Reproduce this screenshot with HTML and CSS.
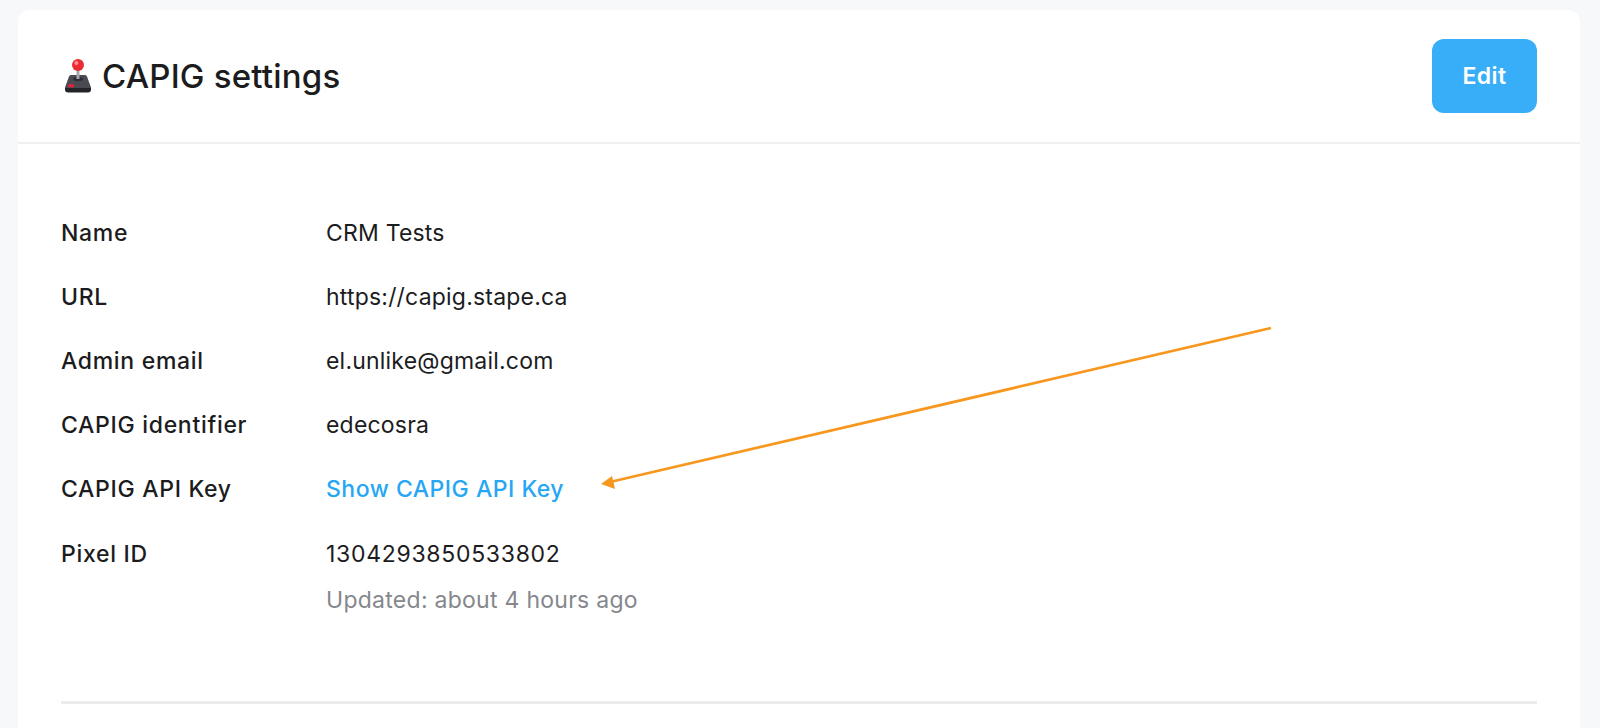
FILE: index.html
```html
<!DOCTYPE html>
<html>
<head>
    <title>CAPIG settings</title>
    <link rel="stylesheet" href="styles.css">
</head>
<body>
    <div class="card">
        <div class="card-header">
            <h1 class="title">
                <!-- Joystick emoji -->
                <svg class="joystick" viewBox="0 0 28 34" width="28" height="34">
                    <path d="M5 17.500 q.5 -1.500 2 -1.500 h14 q1.500 0 2 1.500 l4 11 v1 h-26 v-1 z" fill="#4a4b52"/>
                    <path d="M1 29 h26 v1.500 q0 3 -3 3 h-20 q-3 0 -3 -3 z" fill="#232428"/>
                    <ellipse cx="14" cy="20" rx="5" ry="2" fill="#2c2d32"/>
                    <rect x="12.500" y="10" width="3" height="10" fill="#a3a5ab"/>
                    <rect x="4" y="25" width="6" height="3.500" rx="1.500" fill="#d9243c"/>
                    <circle cx="14" cy="6" r="6" fill="#ea2b33"/>
                    <circle cx="12.400" cy="4" r="2" fill="#ff8d8d"/>
                </svg>
                CAPIG settings
            </h1>
            <button class="edit-btn">Edit</button>
        </div>
        <div class="card-body">
            <div class="row">
                <div class="label">Name</div>
                <div class="value">CRM Tests</div>
            </div>
            <div class="row">
                <div class="label">URL</div>
                <div class="value">https://capig.stape.ca</div>
            </div>
            <div class="row">
                <div class="label">Admin email</div>
                <div class="value">el.unlike@gmail.com</div>
            </div>
            <div class="row">
                <div class="label">CAPIG identifier</div>
                <div class="value">edecosra</div>
            </div>
            <div class="row">
                <div class="label">CAPIG API Key</div>
                <a class="value link" href="#">Show CAPIG API Key</a>
            </div>
            <div class="row">
                <div class="label">Pixel ID</div>
                <div class="value digits">1304293850533802</div>
            </div>
            <div class="row-note">Updated: about 4 hours ago</div>
            <hr class="divider">
        </div>
    </div>

    <!-- Orange annotation arrow -->
    <svg class="arrow" viewBox="0 0 1600 728" width="1600" height="728">
        <line x1="1271" y1="328" x2="610" y2="482" stroke="#f7971e" stroke-width="2.800"/>
        <polygon points="601,484 612,476 615,489" fill="#f7971e"/>
    </svg>
</body>
</html>
```

FILE: styles.css
```css
* {
    margin: 0;
    padding: 0;
    box-sizing: border-box;
}
body {
    font-family: 'Inter', 'Liberation Sans', sans-serif;
    background-color: #f7f8fa;
    color: #1c1c1e;
    height: 728px;
    overflow: hidden;
    padding: 10px 20px 0 18px;
}
.card {
    background-color: #fff;
    border-radius: 12px 12px 0 0;
    height: 718px;
}
/* Header with title and button */
.card-header {
    display: flex;
    align-items: center;
    justify-content: space-between;
    height: 134px;
    padding: 0 43px;
    border-bottom: 2px solid #eff0f1;
}
.title {
    display: flex;
    align-items: center;
    gap: 10px;
    font-size: 33px;
    font-weight: 500;
    letter-spacing: 0.2px;
}
.joystick {
    margin-left: 3px;
}
.edit-btn {
    width: 105px;
    height: 74px;
    background-color: #38aef8;
    color: #fff;
    border: none;
    border-radius: 12px;
    font-family: inherit;
    font-size: 23px;
    font-weight: 600;
    letter-spacing: 0.4px;
}
/* Settings rows */
.card-body {
    padding: 57px 43px 0;
}
.row {
    display: flex;
    align-items: center;
    height: 64.1px;
    font-size: 23px;
}
.label {
    width: 265px;
    font-weight: 500;
    letter-spacing: 0.7px;
}
.value {
    letter-spacing: 0.2px;
}
.digits {
    letter-spacing: 0.7px;
}
.link {
    color: #27a7f3;
    font-weight: 500;
    letter-spacing: 0.5px;
    text-decoration: none;
}
.row-note {
    margin-left: 265px;
    font-size: 23px;
    letter-spacing: 0.27px;
    color: #85878c;
}
.divider {
    margin-top: 87px;
    border: none;
    height: 3px;
    background-color: #ececed;
}
.arrow {
    position: absolute;
    top: 0;
    left: 0;
}
```
